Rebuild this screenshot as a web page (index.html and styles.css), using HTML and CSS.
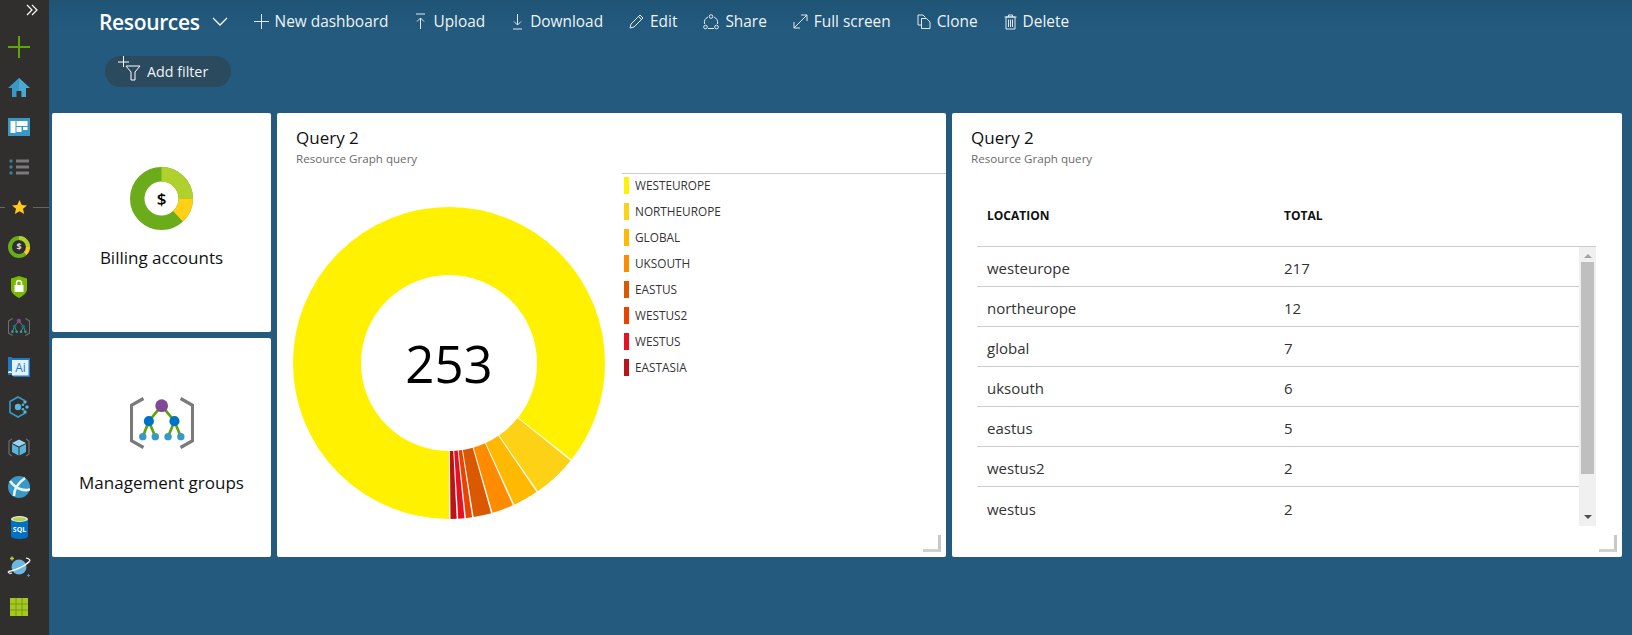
FILE: index.html
```html
<!DOCTYPE html>
<html>
<head>
  <title>Resources - Dashboard</title>
  <link rel="stylesheet" href="styles.css">
</head>
<body>
  <svg class="defs" width="0" height="0">
    <symbol id="mgmt" viewBox="0 0 190 153">
      <path d="M40 4 L4 24 V129 L40 149 M150 4 L186 24 V129 L150 149" fill="none" stroke="currentColor" stroke-width="10"/>
      <path d="M94 25 L56 71 L38 117 M56 71 L75 117 M94 25 L132 71 L113 117 M132 71 L151 117" fill="none" stroke="#5ea507" stroke-width="8"/>
      <circle cx="94" cy="25" r="19" fill="#804998"/>
      <circle cx="56" cy="71" r="15" fill="#0072c6"/>
      <circle cx="132" cy="71" r="15" fill="#0072c6"/>
      <circle cx="38" cy="117" r="11" fill="#3999c6"/>
      <circle cx="75" cy="117" r="11" fill="#3999c6"/>
      <circle cx="113" cy="117" r="11" fill="#3999c6"/>
      <circle cx="151" cy="117" r="11" fill="#3999c6"/>
    </symbol>
  </svg>

  <div class="sidebar">
    <div class="side-toggle">
      <svg width="12" height="12" viewBox="0 0 12 12"><path d="M1 1 L6 6 L1 11 M6 1 L11 6 L6 11" fill="none" stroke="#fff" stroke-width="1.2"/></svg>
    </div>
    <div class="side-item">
      <svg width="22" height="22" viewBox="0 0 22 22"><path d="M0 11 H22 M11 0 V22" stroke="#5ea507" stroke-width="2"/></svg>
    </div>
    <div class="side-item">
      <svg width="22" height="19" viewBox="0 0 22 19"><path d="M11 0 L22 10 H18 V19 H13.5 V13 H8.5 V19 H4 V10 H0 Z" fill="#3999c6"/><path d="M11 0 L22 10 H18 V19 H13.5 V13 H11 Z" fill="#59b4d9" opacity="0.6"/></svg>
    </div>
    <div class="side-item">
      <svg width="22" height="18" viewBox="0 0 22 18"><rect width="22" height="18" fill="#3999c6"/><rect x="2.500" y="3" width="5" height="12" fill="#fff"/><rect x="8.500" y="3" width="11" height="5" fill="#fff"/><rect x="8.500" y="9" width="5" height="5" fill="#fff"/><rect x="15" y="9" width="4.500" height="3" fill="#fff"/></svg>
    </div>
    <div class="side-item">
      <svg width="20" height="16" viewBox="0 0 20 16"><g fill="#3b7ea3"><circle cx="2" cy="2" r="1.700"/><circle cx="2" cy="8" r="1.700"/><circle cx="2" cy="14" r="1.700"/></g><g fill="#7a7a7a"><rect x="7" y="0.500" width="13" height="3"/><rect x="7" y="6.500" width="13" height="3"/><rect x="7" y="12.500" width="13" height="3"/></g></svg>
    </div>
    <div class="side-item side-divider">
      <svg width="15" height="14" viewBox="0 0 15 14"><path d="M7.500 0 L9.800 4.900 L15 5.400 L11 8.800 L12.200 14 L7.500 11.200 L2.800 14 L4 8.800 L0 5.400 L5.200 4.900 Z" fill="#ffca1a"/></svg>
    </div>
    <div class="side-item">
      <svg width="22" height="22" viewBox="0 0 22 22"><circle cx="11" cy="11" r="9" fill="none" stroke="#6bac1a" stroke-width="4"/><path d="M11 0 A11 11 0 0 1 22 11 H18 A7 7 0 0 0 11 4 Z" fill="#b0d12d"/><path d="M22 11 A11 11 0 0 1 18.500 19 L16 16 A7 7 0 0 0 18 11 Z" fill="#ffca1a"/><text x="11" y="14" class="side-dollar">$</text></svg>
    </div>
    <div class="side-item">
      <svg width="16" height="22" viewBox="0 0 16 22"><path d="M8 0 L16 2.500 V13 C16 17 12 20 8 22 C4 20 0 17 0 13 V2.500 Z" fill="#76b900"/><rect x="3.500" y="9" width="9" height="7" fill="#fff"/><path d="M5.500 9 V7 A2.500 2.500 0 0 1 10.500 7 V9" fill="none" stroke="#fff" stroke-width="1.500"/></svg>
    </div>
    <div class="side-item side-mgmt">
      <svg width="22" height="18"><use href="#mgmt"/></svg>
    </div>
    <div class="side-item">
      <svg width="22" height="21" viewBox="0 0 22 21"><path d="M0 2 A2 2 0 0 1 4 0 V1 H22 V20 H6 L4 18 H0 Z" fill="#1f78c8"/><rect x="4" y="3" width="16.500" height="15.500" fill="#e4f2fb"/><path d="M0 16 A2 2 0 0 1 4 16" fill="#fff"/><text x="12.500" y="15" class="side-ai">Ai</text></svg>
    </div>
    <div class="side-item">
      <svg width="20" height="22" viewBox="0 0 20 22"><path d="M15.500 4.500 L9 1 L1 5.500 V16.500 L9 21 L15.500 17.500" fill="none" stroke="#3999c6" stroke-width="1.600"/><circle cx="9" cy="11" r="3.200" fill="#59b4d9"/><g fill="#59b4d9"><circle cx="16" cy="6" r="1.700"/><circle cx="18" cy="11" r="1.700"/><circle cx="16" cy="16" r="1.700"/><circle cx="14" cy="8.800" r="1.300"/><circle cx="14" cy="13.200" r="1.300"/></g></svg>
    </div>
    <div class="side-item">
      <svg width="22" height="19" viewBox="0 0 22 19"><path d="M4 1 L1 3 V16 L4 18 M18 1 L21 3 V16 L18 18" fill="none" stroke="#6e6e6e" stroke-width="1.200"/><path d="M11 1.500 L18 5 L11 8.500 L4 5 Z" fill="#9bd3ee"/><path d="M4 6 L10.500 9.500 V17.500 L4 14 Z" fill="#59b4d9"/><path d="M18 6 L11.500 9.500 V17.500 L18 14 Z" fill="#59b4d9"/></svg>
    </div>
    <div class="side-item">
      <svg width="22" height="22" viewBox="0 0 22 22"><circle cx="11" cy="11" r="11" fill="#3999c6"/><path d="M2 5 C5 9 9 12 12 13 C15 14 19 15 22 13 M6 20 C6 14 10 7 17 2" fill="none" stroke="#e8f4fa" stroke-width="2.600"/></svg>
    </div>
    <div class="side-item">
      <svg width="17" height="23" viewBox="0 0 17 23"><path d="M0 3 V20 C0 22 4 23 8.500 23 C13 23 17 22 17 20 V3 Z" fill="#0072c6"/><ellipse cx="8.500" cy="3" rx="8.500" ry="3" fill="#e8e8e8"/><ellipse cx="8.500" cy="3.200" rx="6.800" ry="2" fill="#b8d432"/><text x="8.500" y="16" class="side-sql">SQL</text></svg>
    </div>
    <div class="side-item">
      <svg width="24" height="22" viewBox="0 0 24 22"><path d="M3 2.500 H7 M5 0.500 V4.500" stroke="#b8d432" stroke-width="1.400"/><circle cx="12" cy="11" r="7.500" fill="#6db7e0"/><path d="M1.500 15.500 C6 15 17 11 22.500 5.500" fill="none" stroke="#fff" stroke-width="1.600"/><path d="M19 2 C22 2.500 23.500 4 22.500 5.500 M1.500 15.500 C0.500 16.500 3 18 5 17" fill="none" stroke="#fff" stroke-width="1.200"/><path d="M20 19.500 H23 M21.500 18 V21" stroke="#3999c6" stroke-width="1"/></svg>
    </div>
    <div class="side-item">
      <svg width="18" height="18" viewBox="0 0 18 18"><rect width="18" height="18" fill="#a4c81d"/><path d="M6 0 V18 M12 0 V18 M0 6 H18 M0 12 H18" stroke="#7d9a1a" stroke-width="1"/></svg>
    </div>
  </div>

  <div class="main">
    <div class="toolbar">
      <h1 class="dash-title">Resources</h1>
      <svg class="title-caret" width="16" height="9" viewBox="0 0 16 9"><path d="M1 1 L8 8 L15 1" fill="none" stroke="#fff" stroke-width="1.300"/></svg>
      <div class="cmd">
        <svg width="15" height="15" viewBox="0 0 15 15"><path d="M0 7.500 H15 M7.500 0 V15"/></svg>
        <span>New dashboard</span>
      </div>
      <div class="cmd">
        <svg width="13" height="17" viewBox="0 0 13 17"><path d="M2 1 H11 M6.500 16 V5 M3 8.500 L6.500 5 L10 8.500"/></svg>
        <span>Upload</span>
      </div>
      <div class="cmd">
        <svg width="13" height="17" viewBox="0 0 13 17"><path d="M2 16 H11 M6.500 1 V12 M3 8.500 L6.500 12 L10 8.500"/></svg>
        <span>Download</span>
      </div>
      <div class="cmd">
        <svg width="15" height="15" viewBox="0 0 15 15"><path d="M1 14 L2 10 L11 1 L14 4 L5 13 Z M9.500 2.500 L12.500 5.500"/></svg>
        <span>Edit</span>
      </div>
      <div class="cmd">
        <svg width="16" height="16" viewBox="0 0 16 16"><circle cx="8" cy="2.500" r="1.800"/><circle cx="2.500" cy="13" r="1.800"/><circle cx="13.500" cy="13" r="1.800"/><path d="M5 3 A6.500 6.500 0 0 0 1.500 10 M11 3 A6.500 6.500 0 0 1 14.500 10 M5 14.500 H11"/></svg>
        <span>Share</span>
      </div>
      <div class="cmd">
        <svg width="15" height="15" viewBox="0 0 15 15"><path d="M1 14 L14 1 M8 1 H14 V7 M1 8 V14 H7"/></svg>
        <span>Full screen</span>
      </div>
      <div class="cmd">
        <svg width="14" height="15" viewBox="0 0 14 15"><path d="M4 11 H1 V1 H6 L8.500 3.500 M4.500 4.500 H9.500 L13 8 V14.500 H4.500 Z"/></svg>
        <span>Clone</span>
      </div>
      <div class="cmd">
        <svg width="13" height="16" viewBox="0 0 13 16"><path d="M2 3 H11 V15 H2 Z M0.500 3 H12.500 M4.500 3 V1 H8.500 V3 M4.500 5.500 V13 M6.500 5.500 V13 M8.500 5.500 V13"/></svg>
        <span>Delete</span>
      </div>
    </div>

    <div class="filter-row">
      <button class="filter-pill">
        <svg width="23" height="25" viewBox="0 0 23 25"><path d="M0 6 H11 M5.500 0 V11 M8 10 H22 L17 16 V24 H13 V16 Z" fill="none" stroke="#fff" stroke-width="1"/></svg>
        Add filter
      </button>
    </div>

    <div class="tiles">
      <div class="tile tile-small">
        <div class="tile-icon">
          <svg width="63" height="63" viewBox="0 0 63 63">
            <circle cx="31.500" cy="31.500" r="24.250" fill="none" stroke="#6bac1a" stroke-width="14.500"/>
            <path d="M31.500 0 A31.500 31.500 0 0 1 63 31.500 H48.500 A17 17 0 0 0 31.500 14.500 Z" fill="#b0d12d"/>
            <path d="M63 31.500 A31.500 31.500 0 0 1 52.900 54.600 L43 44 A17 17 0 0 0 48.500 31.500 Z" fill="#ffd015"/>
            <text x="31.500" y="37.500" class="tile-dollar">$</text>
          </svg>
        </div>
        <div class="tile-label">Billing accounts</div>
      </div>

      <div class="tile tile-query">
        <div class="tile-head">
          <div class="tile-title">Query 2</div>
          <div class="tile-sub">Resource Graph query</div>
        </div>
        <div class="chart-body">
          <div class="donut">
            <svg width="312" height="312" viewBox="0 0 312 312">
              <g transform="rotate(90 156 156)" fill="none" stroke-width="68">
                <circle cx="156" cy="156" r="122" pathLength="253" stroke="#fff100" stroke-dasharray="216.6 36.4" stroke-dashoffset="0"/>
                <circle cx="156" cy="156" r="122" pathLength="253" stroke="#fcd116" stroke-dasharray="11.600 241.400" stroke-dashoffset="-217"/>
                <circle cx="156" cy="156" r="122" pathLength="253" stroke="#ffb900" stroke-dasharray="6.600 246.400" stroke-dashoffset="-229"/>
                <circle cx="156" cy="156" r="122" pathLength="253" stroke="#ff8c00" stroke-dasharray="5.600 247.400" stroke-dashoffset="-236"/>
                <circle cx="156" cy="156" r="122" pathLength="253" stroke="#da5900" stroke-dasharray="4.600 248.400" stroke-dashoffset="-242"/>
                <circle cx="156" cy="156" r="122" pathLength="253" stroke="#ea4300" stroke-dasharray="1.600 251.400" stroke-dashoffset="-247"/>
                <circle cx="156" cy="156" r="122" pathLength="253" stroke="#e81123" stroke-dasharray="1.600 251.400" stroke-dashoffset="-249"/>
                <circle cx="156" cy="156" r="122" pathLength="253" stroke="#ba141a" stroke-dasharray="1.600 251.400" stroke-dashoffset="-251"/>
              </g>
            </svg>
            <div class="donut-total">253</div>
          </div>
          <ul class="legend">
            <li><i class="sw sw1"></i>WESTEUROPE</li>
            <li><i class="sw sw2"></i>NORTHEUROPE</li>
            <li><i class="sw sw3"></i>GLOBAL</li>
            <li><i class="sw sw4"></i>UKSOUTH</li>
            <li><i class="sw sw5"></i>EASTUS</li>
            <li><i class="sw sw6"></i>WESTUS2</li>
            <li><i class="sw sw7"></i>WESTUS</li>
            <li><i class="sw sw8"></i>EASTASIA</li>
          </ul>
        </div>
        <div class="resize"></div>
      </div>

      <div class="tile tile-query">
        <div class="tile-head">
          <div class="tile-title">Query 2</div>
          <div class="tile-sub">Resource Graph query</div>
        </div>
        <div class="results">
          <div class="results-head">
            <span>LOCATION</span>
            <span>TOTAL</span>
          </div>
          <div class="results-scroll">
            <div class="results-rows">
              <div class="row"><span>westeurope</span><span>217</span></div>
              <div class="row"><span>northeurope</span><span>12</span></div>
              <div class="row"><span>global</span><span>7</span></div>
              <div class="row"><span>uksouth</span><span>6</span></div>
              <div class="row"><span>eastus</span><span>5</span></div>
              <div class="row"><span>westus2</span><span>2</span></div>
              <div class="row"><span>westus</span><span>2</span></div>
            </div>
            <div class="scrollbar">
              <i class="arrow-up"></i>
              <div class="thumb"></div>
              <i class="arrow-down"></i>
            </div>
          </div>
        </div>
        <div class="resize"></div>
      </div>

      <div class="tile tile-small">
        <div class="tile-icon">
          <svg class="mgmt-icon" width="64" height="52"><use href="#mgmt"/></svg>
        </div>
        <div class="tile-label">Management groups</div>
      </div>
    </div>
  </div>
</body>
</html>
```

FILE: styles.css
```css
html, body {
  margin: 0;
  height: 100%;
  overflow: hidden;
}

body {
  display: flex;
  font-family: "Open Sans", "Noto Sans", sans-serif;
  background-color: #235a7e;
}

.defs {
  position: absolute;
}

/* left nav */
.sidebar {
  width: 49px;
  flex: none;
  background-color: #302f2e;
}

.side-toggle {
  height: 27px;
  padding: 4px 0 0 26px;
  box-sizing: border-box;
}

.side-toggle svg {
  display: block;
}

.side-item {
  height: 40px;
  display: flex;
  align-items: center;
  justify-content: center;
  padding-right: 11px;
  box-sizing: border-box;
}

.side-divider {
  background: linear-gradient(#66656a, #66656a) 33px 50% / 16px 1px no-repeat,
              linear-gradient(#66656a, #66656a) 0 50% / 5px 1px no-repeat;
}

.side-mgmt {
  color: #6e6e6e;
}

.side-dollar {
  font-size: 9px;
  font-weight: 700;
  fill: #ddd;
  text-anchor: middle;
}

.side-ai {
  font-size: 12px;
  font-weight: 400;
  fill: #1f78c8;
  text-anchor: middle;
}

.side-sql {
  font-size: 7px;
  font-weight: 700;
  fill: #fff;
  text-anchor: middle;
}

/* main area */
.main {
  flex: 1;
  min-width: 0;
  background: linear-gradient(#1f5475, #235a7e 30px);
}

.toolbar {
  height: 43px;
  display: flex;
  align-items: center;
  padding-left: 50px;
  color: #eef3f6;
}

.dash-title {
  margin: 0 12px 0 0;
  font-size: 21px;
  font-weight: 600;
  letter-spacing: -0.35px;
  color: #fff;
}

.title-caret {
  margin-right: 26px;
}

.cmd {
  display: flex;
  align-items: center;
  gap: 6px;
  margin-right: 26px;
  font-size: 15.400px;
  white-space: nowrap;
}

.cmd svg {
  fill: none;
  stroke: #e3eaef;
  stroke-width: 1;
}

.filter-row {
  height: 70px;
  padding: 13px 0 0 56px;
  box-sizing: border-box;
}

.filter-pill {
  width: 126px;
  height: 31px;
  display: flex;
  align-items: center;
  gap: 6px;
  padding: 0 0 0 13px;
  font-family: inherit;
  font-size: 14.300px;
  color: #eef3f6;
  background-color: #2b4a5e;
  border: none;
  border-radius: 16px;
}

.filter-pill svg {
  margin-top: -6px;
}

.tiles {
  display: grid;
  grid-template-columns: 219px 669px 670px;
  grid-template-rows: 219px 219px;
  gap: 6px;
  padding-left: 3px;
}

.tile {
  position: relative;
  background-color: #fff;
  border-radius: 2px;
}

.tile-small {
  display: flex;
  flex-direction: column;
  align-items: center;
  padding-top: 54px;
  box-sizing: border-box;
}

.tile-icon {
  height: 58px;
}

.tile-label {
  margin-top: 21px;
  font-size: 17px;
  color: #111;
  white-space: nowrap;
}

.tile-dollar {
  font-size: 17px;
  font-weight: 600;
  fill: #000;
  text-anchor: middle;
}

.mgmt-icon {
  margin-top: 5px;
  color: #7a7a7a;
}

.tile-query {
  grid-row: span 2;
  display: flex;
  flex-direction: column;
}

.tile-head {
  height: 60px;
  flex: none;
  padding: 13px 0 0 19px;
  box-sizing: border-box;
}

.tile-title {
  font-size: 17px;
  line-height: 24px;
  color: #111;
}

.tile-sub {
  margin-top: 1px;
  font-size: 11.600px;
  line-height: 16px;
  color: #6b6b6b;
}

/* donut and legend */
.chart-body {
  flex: 1;
  display: flex;
}

.donut {
  position: relative;
  width: 312px;
  height: 312px;
  margin: 34px 17px 0 16px;
  flex: none;
}

.donut svg {
  display: block;
}

.donut-total {
  position: absolute;
  inset: 0;
  display: flex;
  align-items: center;
  justify-content: center;
  font-size: 51px;
  color: #000;
}

.legend {
  flex: 1;
  height: 100%;
  margin: 0;
  padding: 3px 0 0 2px;
  list-style-type: none;
  border-top: 1px solid #ccc;
}

.legend li {
  height: 26px;
  display: flex;
  align-items: flex-start;
  gap: 6px;
  font-size: 11.800px;
  line-height: 17px;
  color: #333;
}

.sw {
  width: 5px;
  height: 17px;
  flex: none;
}

.sw1 { background-color: #fff100; }
.sw2 { background-color: #fcd116; }
.sw3 { background-color: #ffb900; }
.sw4 { background-color: #ff8c00; }
.sw5 { background-color: #da5900; }
.sw6 { background-color: #ea4300; }
.sw7 { background-color: #e81123; }
.sw8 { background-color: #ba141a; }

/* results table */
.results {
  margin: 0 26px 0 25px;
}

.results-head {
  height: 73px;
  display: grid;
  grid-template-columns: 297px 1fr;
  align-items: end;
  padding: 0 0 22px 10px;
  box-sizing: border-box;
  font-size: 12px;
  line-height: 16px;
  font-weight: 700;
  color: #111;
}

.results-scroll {
  height: 280px;
  display: flex;
  overflow: hidden;
  border-top: 1px solid #ccc;
}

.results-rows {
  flex: 1;
}

.row {
  height: 40px;
  display: grid;
  grid-template-columns: 297px 1fr;
  align-items: center;
  padding: 3px 0 0 10px;
  box-sizing: border-box;
  font-size: 15px;
  color: #333;
  border-bottom: 1px solid #ccc;
}

.row:last-child {
  border-bottom: none;
}

.scrollbar {
  width: 17px;
  height: 279px;
  flex: none;
  display: flex;
  flex-direction: column;
  align-items: center;
  background-color: #f0f0f0;
}

.thumb {
  width: 13px;
  height: 212px;
  margin-top: 4px;
  background-color: #bfbfbf;
}

.arrow-up {
  margin-top: 7px;
  border: 4px solid transparent;
  border-top: none;
  border-bottom: 4px solid #a3a3a3;
}

.arrow-down {
  margin-top: auto;
  margin-bottom: 7px;
  border: 4px solid transparent;
  border-bottom: none;
  border-top: 4px solid #505050;
}

/* corner grip */
.resize {
  position: absolute;
  right: 5px;
  bottom: 5px;
  width: 15px;
  height: 14px;
  border-right: 3px solid #c8c8c8;
  border-bottom: 3px solid #d0d0d0;
}
```
